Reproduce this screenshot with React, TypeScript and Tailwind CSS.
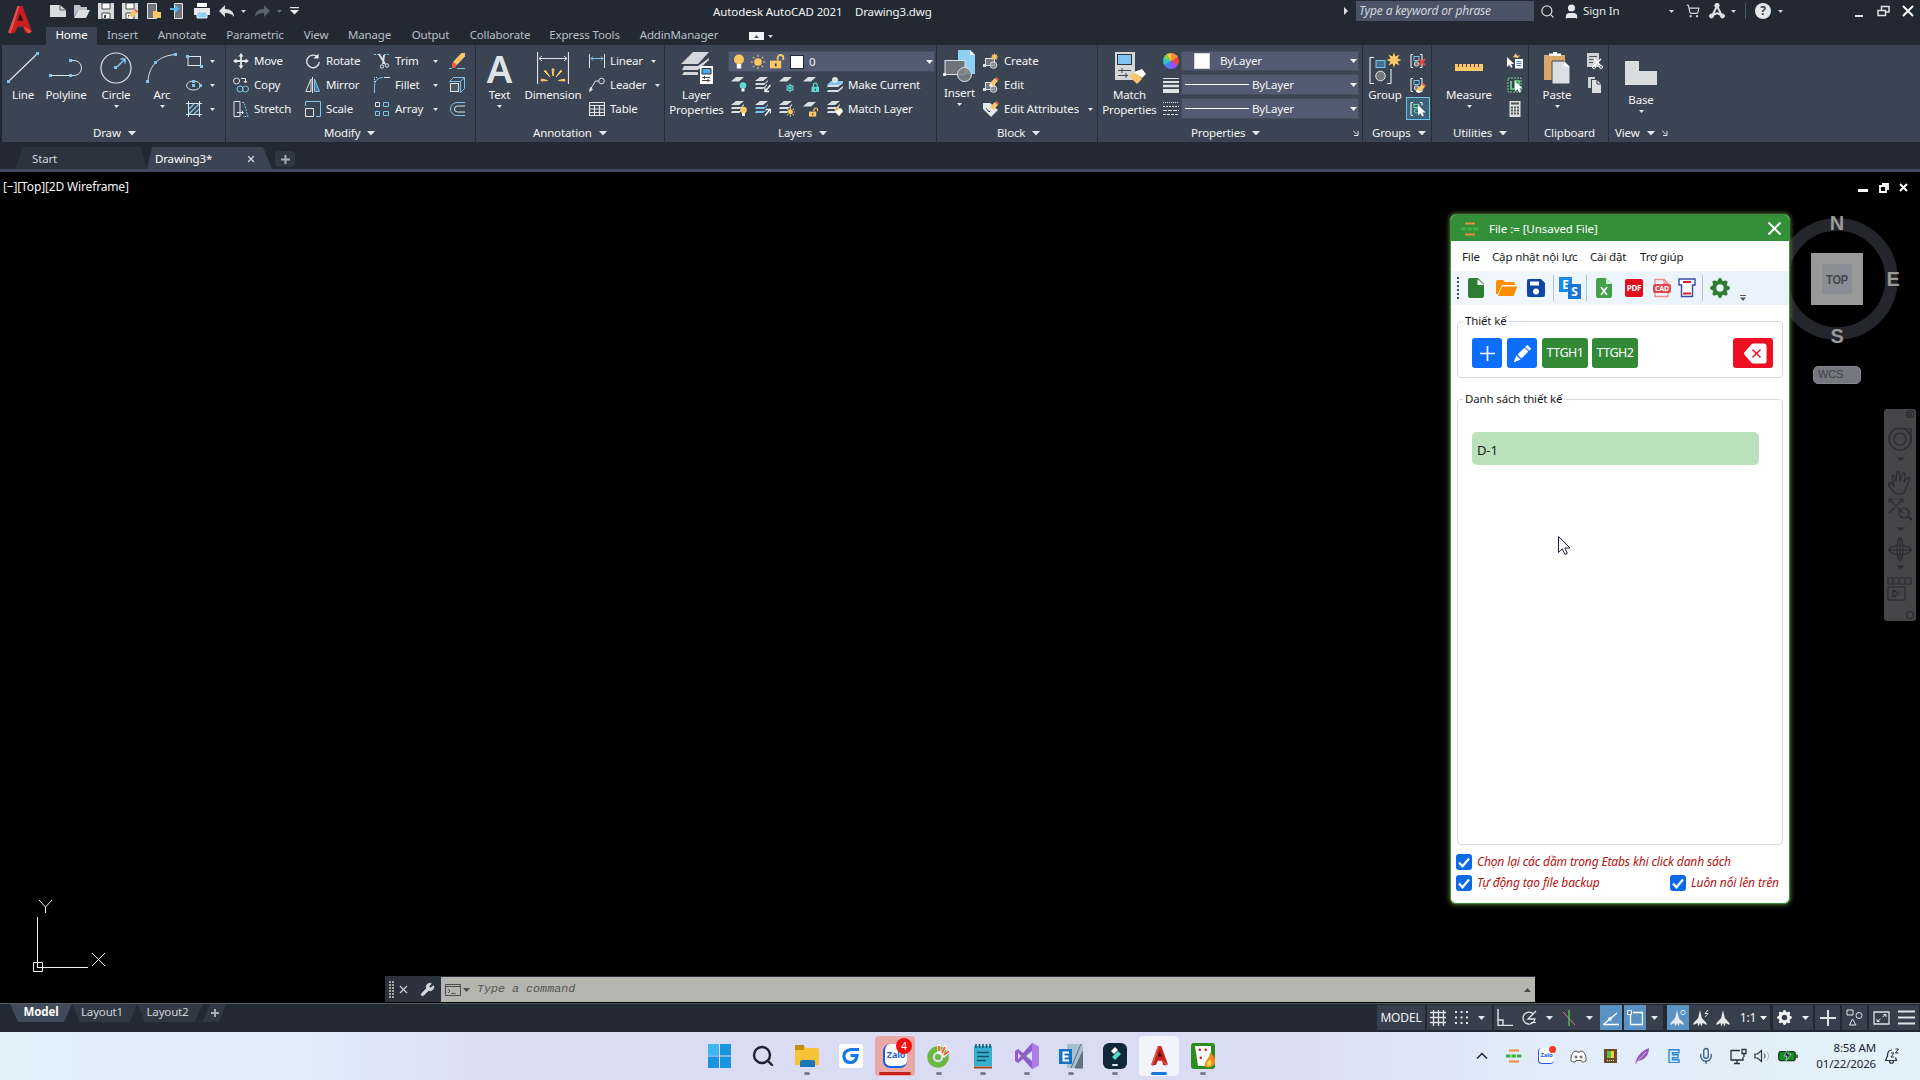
import type { ReactNode } from "react";
import { clsx } from "clsx";
import { twMerge } from "tailwind-merge";
import { Search, User, ShoppingCart, Wrench, X, Mic } from "lucide-react";
import { BsGearFill, BsPencilFill, BsBackspaceFill } from "react-icons/bs";

interface IconProps {
  w?: number,
  h?: number,
  className?: string,
  children: ReactNode,
}

const Ico = ({ w = 16, h = 16, className, children }: IconProps) => (
  <svg width={w} height={h} viewBox={`0 0 ${w} ${h}`} fill="none" stroke="#dfe3e6" strokeWidth="1" className={clsx("shrink-0", className)}>
    {children}
  </svg>
);

const Caret = ({ className, size = 5 }: { className?: string, size?: number }) => (
  <svg width={size} height={(size + 1) / 2} viewBox="0 0 10 5" preserveAspectRatio="none" className={clsx("shrink-0", className || "text-gray-200")}>
    <path d="M0 0h10L5 5z" fill="currentColor" />
  </svg>
);

const Launcher = () => (
  <Ico w={6} h={6}><path d="M0 .5 4 4.5M5 1v4.5H1" /></Ico>
);

const BLUE = "#7fc4ec";
const YELLOW = "#fbc767";
const TEAL = "#5fd9cf";

/* ---------- RIBBON ICONS ---------- */

const Dot = ({ x, y }: { x: number, y: number }) => (
  <rect x={x} y={y} width="3" height="3" fill={BLUE} stroke="none" />
);

const Pencil = ({ x, y }: { x: number, y: number }) => (
  <g transform={`translate(${x} ${y})`} stroke="none">
    <path d="M0 9 1.200 6 5 9.200 3 10z" fill="#fff" />
    <path d="M1 6 6 1 9 4 4 9z" fill={YELLOW} />
    <path d="M6 1 7.500 0 10 2.500 9 4z" fill="#ef5b50" />
  </g>
);

const Sheet = ({ x, y, s = 1, fill = "#dcdfe2" }: { x: number, y: number, s?: number, fill?: string }) => (
  <path transform={`translate(${x} ${y}) scale(${s})`} d="M5 0h8L8 4.500H0z" fill={fill} stroke="none" />
);

const Sheets = ({ accent }: { accent?: string }) => (
  <g stroke="none">
    <path d="M5 0h8L8 4H0z" fill="#dcdfe2" />
    <path d="M1 6h9l3-3v1.500L9 8H0z" fill={accent || "#dcdfe2"} />
    <path d="M1 10h8l3-3v1.500L8 12H0z" fill={accent || "#dcdfe2"} />
  </g>
);

const Bulb = ({ x, y, r = 3.5, fill = YELLOW }: { x: number, y: number, r?: number, fill?: string }) => (
  <g stroke="none">
    <circle cx={x} cy={y} r={r} fill={fill} />
    <rect x={x - r * 0.45} y={y + r * 0.9} width={r * 0.9} height={r * 0.9} fill="#fff" />
  </g>
);

const Sun = ({ x, y, r = 4, k = 1.9 }: { x: number, y: number, r?: number, k?: number }) => (
  <g stroke={YELLOW}>
    <circle cx={x} cy={y} r={r} fill={YELLOW} stroke="none" />
    {[0, 45, 90, 135, 180, 225, 270, 315].map((a) => (
      <path key={a} d={`M${r * 1.3} 0H${r * k}`} transform={`translate(${x} ${y}) rotate(${a})`} />
    ))}
  </g>
);

const Lock = ({ x, y, fill = YELLOW, open = false, s = 1 }: { x: number, y: number, fill?: string, open?: boolean, s?: number }) => (
  <g transform={`translate(${x} ${y}) scale(${s})`}>
    <rect x="0" y="4" width="8" height="5.500" fill={fill} stroke="none" />
    <path d={open ? "M5.500 4V2a2 2 0 0 1 4 0v1.500" : "M2 4V2.200a2 2 0 0 1 4 0V4"} stroke={fill} strokeWidth="1.3" />
    <rect x="3.500" y="6" width="1.200" height="2" fill="#333" stroke="none" />
  </g>
);

const Star = ({ x, y, s = 1 }: { x: number, y: number, s?: number }) => (
  <path
    transform={`translate(${x} ${y}) scale(${s})`}
    d="M0-7 1.300-3.200 5-5 3.200-1.300 7 0 3.200 1.300 5 5 1.300 3.200 0 7-1.300 3.200-5 5-3.200 1.300-7 0-3.200-1.300-5-5-1.300-3.200z"
    fill={YELLOW} stroke="none"
  />
);

const BlockShape = () => (
  <g>
    <rect x="2.500" y="5.500" width="9" height="7" fill="#6f757c" />
    <circle cx="10.500" cy="12" r="3.300" fill="#8b9096" fillOpacity=".7" />
    <rect x="0" y="11" width="3" height="3" fill="#dfe3e6" stroke="none" />
  </g>
);

const Arrow = ({ x, y, s = 1 }: { x: number, y: number, s?: number }) => (
  <path transform={`translate(${x} ${y}) scale(${s})`} d="M0 0v11l2.600-2.400L4.400 12l1.800-.900L4.600 7.800H8z" fill="#fff" stroke="none" />
);

/* ---------- RIBBON PARTS ---------- */

interface PanelProps {
  title: string,
  className: string,
  footClass?: string,
  caret?: boolean,
  launcher?: boolean,
  children: ReactNode,
}

const Panel = ({ title, className, footClass, caret = true, launcher, children }: PanelProps) => (
  <section className={clsx("flex flex-col shrink-0 border-r border-[#262e3a]", className)}>
    <div className="flex h-[79px] pt-1">{children}</div>
    <div className={clsx("flex h-[18px] items-center gap-[7px]", footClass || "justify-center")}>
      <span>{title}</span>
      {caret && <Caret size={8} />}
      {launcher && <Launcher />}
    </div>
  </section>
);

interface BigProps {
  label: string,
  second?: string,
  caret?: boolean,
  className: string,
  icon: ReactNode,
}

const Big = ({ label, second, caret, className, icon }: BigProps) => (
  <button className={clsx("flex flex-col items-center shrink-0", className)}>
    <span className="mt-[3px] flex h-8 items-center">{icon}</span>
    <span className="mt-[3px] leading-[15px] whitespace-nowrap">{label}</span>
    {second && <span className="leading-[15px] whitespace-nowrap">{second}</span>}
    {caret && <Caret className="mt-[3px] text-gray-200" />}
  </button>
);

const Row = ({ icon, label, caretClass }: { icon: ReactNode, label?: string, caretClass?: string }) => (
  <div className="flex h-6 items-center">
    {icon}
    {label && <span className="ml-[5px] whitespace-nowrap">{label}</span>}
    {caretClass && <Caret className={clsx("text-gray-200", caretClass)} />}
  </div>
);

const Combo = ({ className, children }: { className?: string, children: ReactNode }) => (
  <div className={clsx("flex items-center border border-[#444c60] bg-[#525b72] pr-px", className)}>
    {children}
    <Caret size={7} className="ml-auto text-gray-100" />
  </div>
);

const DrawPanel = () => (
  <Panel title="Draw" className="w-[224px]" footClass="pl-[91px]">
    <Big label="Line" className="w-[42px]" icon={
      <Ico w={32} h={32}><path d="M2 29 30 2" strokeWidth="1.200" /><Dot x={0} y={28} /><Dot x={29} y={0} /></Ico>
    } />
    <Big label="Polyline" className="w-[44px]" icon={
      <Ico w={34} h={32}><path d="M2 23.500H22M22 8.500h3a7.300 7.300 0 0 1 0 15h-3" /><Dot x={0} y={22} /><Dot x={20} y={22} /><Dot x={20} y={7} /></Ico>
    } />
    <Big label="Circle" caret className="w-[56px]" icon={
      <Ico w={32} h={32}><circle cx="16" cy="16" r="15" strokeWidth="1.200" /><path d="m17 15 8-8M20.500 7H25v4.500" stroke={BLUE} strokeWidth="1.500" /><Dot x={14} y={14} /></Ico>
    } />
    <Big label="Arc" caret className="w-[36px]" icon={
      <Ico w={32} h={32}><path d="M2 29C3 14 12 4 29 2.500" /><Dot x={0} y={28} /><Dot x={8} y={9} /><Dot x={28} y={1} /></Ico>
    } />
    <div className="ml-[6px] flex flex-col">
      <Row caretClass="ml-[7px]" icon={<Ico w={17}><rect x="2" y="3.500" width="12.500" height="9" /><Dot x={0} y={2} /><Dot x={14} y={12} /></Ico>} />
      <Row caretClass="ml-[7px]" icon={<Ico w={17}><ellipse cx="7.500" cy="8.500" rx="7" ry="4.500" /><Dot x={6} y={7} /><Dot x={6} y={3} /><Dot x={13} y={7} /></Ico>} />
      <Row caretClass="ml-[7px]" icon={<Ico w={17}><path d="M2.500 0v16M13.500 0v16M0 2.500h16M0 13.500h16" /><path d="m3 8 5-5M3 13 13 3M8 13l5-5" stroke={BLUE} strokeWidth="1.400" /></Ico>} />
    </div>
  </Panel>
);

const ModifyPanel = () => (
  <Panel title="Modify" className="w-[250px]" footClass="pl-[98px]">
    <div className="ml-[7px] w-[72px]">
      <Row label="Move" icon={<Ico><path d="M8 2v12M2 8h12" strokeWidth="1.800" /><path d="M8 0 5.500 3.500h5zM8 16l-2.500-3.500h5zM0 8l3.500-2.500v5zM16 8l-3.500-2.500v5z" fill="#eee" stroke="none" /></Ico>} />
      <Row label="Copy" icon={<Ico><circle cx="3.500" cy="4" r="3" /><path d="M8 1.500h4.500V5M11 4l1.500 2L14 4" /><circle cx="7" cy="12" r="3" stroke={BLUE} /><circle cx="12.500" cy="12" r="3" stroke={BLUE} /></Ico>} />
      <Row label="Stretch" icon={<Ico><path d="M1 .500h6v15H1zM4 11.500h6M8.500 9.500l2 2-2 2" /><path d="M9 1.500h2l4 14h-5" stroke={BLUE} strokeDasharray="2 1" /></Ico>} />
    </div>
    <div className="w-[69px]">
      <Row label="Rotate" icon={<Ico><path d="M12.500 4A6.300 6.300 0 1 0 14.300 9" strokeWidth="1.400" /><path d="M13.500.500v5h-5z" fill="#eee" stroke="none" /></Ico>} />
      <Row label="Mirror" icon={<Ico><path d="M6 2v12.500H.800zM7.500 0v16" /><path d="M9.500 2v12.500h5z" stroke={BLUE} fill="#3f7fa8" /></Ico>} />
      <Row label="Scale" icon={<Ico><path d="M.500 7.500h8v8h-8z" /><path d="M.500 5V.500h15v15H11" stroke={BLUE} /></Ico>} />
    </div>
    <div className="w-[75px]">
      <Row label="Trim" caretClass="ml-[14px]" icon={<Ico><path d="M0 1.500h5M10 1.500h6" stroke={BLUE} strokeDasharray="2 1" /><path d="m5 1 6 10M10 2l-1 9" strokeWidth="1.800" /><circle cx="8" cy="13.500" r="1.700" /><circle cx="13" cy="12.500" r="1.700" /></Ico>} />
      <Row label="Fillet" caretClass="ml-[13px]" icon={<Ico><path d="M.500 16V9C.500 3 4 .800 9 .500" stroke={BLUE} /><path d="M10 .500h6" /><path d="M.500 5V.500H4" strokeDasharray="1 1" /></Ico>} />
      <Row label="Array" caretClass="ml-[10px]" icon={<Ico><path d="M1.500 1.500h4v4h-4z" /><path d="M9.500 1.500h5v4h-5zM1.500 10.500h4v4h-4zM9.500 10.500h5v4h-5z" stroke={BLUE} /></Ico>} />
    </div>
    <div>
      <Row icon={<Ico><path d="m4 9 8.500-9H16v3.500L8 12z" fill={YELLOW} stroke="none" /><path d="m4 9 4 3-2 3H3v-4z" fill="#ef5b50" stroke="none" /><path d="M0 15.500h3M8 15.500h8" stroke={BLUE} /></Ico>} />
      <Row icon={<Ico><rect x="1.500" y="6.500" width="8" height="8" fill="#4f5a68" /><path d="m.500 4.500 4-4h11v11l-4 4M.500 4.500h11v11M11.500 4.500l4-4" stroke={BLUE} /></Ico>} />
      <Row icon={<Ico><path d="M16 1.500H8a6.300 6.300 0 0 0 0 13h8" stroke={BLUE} /><path d="M16 5H8.500a3 3 0 0 0 0 6H16" /></Ico>} />
    </div>
  </Panel>
);

const AnnotationPanel = () => (
  <Panel title="Annotation" className="w-[189px]" footClass="pl-[57px]">
    <Big label="Text" caret className="ml-[2px] w-[43px]" icon={
      <span className="text-[38px] leading-8 font-semibold text-[#dfe3e6]">A</span>
    } />
    <Big label="Dimension" className="w-[64px]" icon={
      <Ico w={32} h={32}>
        <path d="M.500 0v32M31.500 0v32" strokeWidth="1.200" /><path d="M2 6.500h28M5 4 2 6.500 5 9M27 4l3 2.500L27 9" />
        <path d="M15 17h2l-1 7zM7 19l1.500-.500L13 25zM25 19l-1.500-.500L19 25zM4 29l.500-2 6 1.500zM28 29l-.500-2-6 1.500z" fill={YELLOW} stroke={YELLOW} />
      </Ico>
    } />
    <div className="ml-[4px]">
      <Row label="Linear" caretClass="ml-[8px]" icon={<Ico><path d="M.500 1v14M15.500 1v14" /><path d="M2 5.500h12M4 3.500l-2 2 2 2M12 3.500l2 2-2 2" stroke={BLUE} /></Ico>} />
      <Row label="Leader" caretClass="ml-[9px]" icon={<Ico><circle cx="12.500" cy="4" r="2.800" /><path d="M9.500 4H6.500L1 13" /><path d="M0 15.500 1 10l3 2.500z" fill="#dfe3e6" stroke="none" /></Ico>} />
      <Row label="Table" icon={<Ico><path d="M.500 1.500h15v13H.500zM.500 4.500h15M.500 8h15M.500 11.500h15M5.500 4.500v10M10.500 4.500v10" strokeWidth="1.200" /></Ico>} />
    </div>
  </Panel>
);

const LayersPanel = () => (
  <Panel title="Layers" className="w-[272px]" footClass="pl-[113px]">
    <Big label="Layer" second="Properties" className="w-[63px]" icon={
      <Ico w={32} h={32}>
        <path d="M12 0h16L17 12H0zM3 14h14l11-8v2L17 18H1zM3 20h14v3H1z" fill="#d5d8db" stroke="none" />
        <path d="M19 14h13v18H19z" fill="#fff" stroke="none" /><path d="M21 16.500h9v5.500h-9z" fill="#4aa9e8" stroke="#333" /><path d="M21 25.500h8M21 28.500h8M23.500 24v3M27 27v3" stroke="#444" />
      </Ico>
    } />
    <div className="flex flex-col">
      <Combo className="mt-[2px] h-[21px] w-[207px] pl-[4px]" >
        <Ico w={13} h={16}><Bulb x={6} y={5.5} r={5} /></Ico>
        <Ico w={16} h={16} className="ml-[4px]"><Sun x={8} y={8} r={3.8} /></Ico>
        <Ico w={16} h={16} className="ml-[3px]"><g transform="translate(1 1)"><Lock x={0} y={0} s={1.4} open /></g></Ico>
        <span className="ml-[5px] h-[14px] w-[14px] border border-gray-800 bg-white" />
        <span className="ml-[5px]">0</span>
      </Combo>
      <div className="mt-px flex h-6 items-center gap-2 pl-[3px]">
        <Ico><Sheet x={0} y={0} /><Bulb x={12} y={8.5} r={3.3} fill={TEAL} /></Ico>
        <Ico><Sheets accent="#d5d8db" /><path d="m15.500 8-5 6M10 10.500V14.500h4" stroke="#fff" strokeWidth="1.300" /></Ico>
        <Ico><Sheet x={0} y={0} /><circle cx="11" cy="11" r="3" stroke={TEAL} /><path d="M11 6.500v9M7 8.700l8 4.600M15 8.700l-8 4.600" stroke={TEAL} /></Ico>
        <Ico><Sheet x={0} y={0} /><Lock x={8.5} y={6} fill={TEAL} s={0.95} /></Ico>
        <Ico w={17}><path d="M1 8h10l5-4v2l-5 4H0zM1 13h10l5-4v2l-5 4H0z" fill="#dcdfe2" stroke="none" /><path d="M4 4h12l-4 4H0z" fill={BLUE} stroke="none" /><circle cx="8" cy="3" r="3" fill="#dcdfe2" stroke="none" /></Ico>
        <span className="-ml-[4px]">Make Current</span>
      </div>
      <div className="flex h-6 items-center gap-2 pl-[3px]">
        <Ico><Sheets /><Bulb x={12.5} y={9} r={3.3} /></Ico>
        <Ico><Sheets accent={BLUE} /><path d="m10 14.500 5-6M11 8.500h4.500v4" stroke="#fff" strokeWidth="1.300" /></Ico>
        <Ico><Sheets /><Sun x={11.5} y={11} r={2.4} k={2} /></Ico>
        <Ico><Sheet x={0} y={1} /><Lock x={6} y={7} open s={0.9} /></Ico>
        <Ico w={17}><Sheets /><path d="m8 8 5 6M10 6l5 6" stroke={YELLOW} strokeWidth="2" /><path d="m8 11 6-4 2 3-4 5z" fill="#fff" stroke="none" /></Ico>
        <span className="-ml-[4px]">Match Layer</span>
      </div>
    </div>
  </Panel>
);

const BlockPanel = () => (
  <Panel title="Block" className="w-[161px]" footClass="pl-[60px]">
    <Big label="Insert" caret className="-mt-[2px] w-[45px]" icon={
      <Ico w={33} h={33}>
        <path d="M15 0h12l5 5v19H15z" fill="#8fd0f5" stroke="none" /><path d="M27 0v5h5z" fill="#fff" stroke="none" />
        <rect x="2" y="10.500" width="20" height="14" fill="#6f757c" /><circle cx="21.500" cy="24.500" r="7" fill="#7b8187" fillOpacity=".85" /><rect x="0" y="23" width="3" height="3" fill="#eee" stroke="none" />
      </Ico>
    } />
    <div className="ml-px">
      <Row label="Create" icon={<Ico><BlockShape /><Star x={11.5} y={4} s={0.6} /></Ico>} />
      <Row label="Edit" icon={<Ico><BlockShape /><Pencil x={6} y={0} /></Ico>} />
      <Row label="Edit Attributes" caretClass="ml-[9px]" icon={<Ico><path d="M0 2h7l8 7-7 7-8-8z" fill="#e4e7e9" stroke="none" /><path d="m3 7 3 4 4-4" stroke="#444" /><Pencil x={6} y={0} /></Ico>} />
    </div>
  </Panel>
);

const PropertiesPanel = () => (
  <Panel title="Properties" className="w-[265px]" footClass="pl-[93px] [&>svg:last-child]:ml-[86px]" launcher>
    <Big label="Match" second="Properties" className="w-[63px]" icon={
      <Ico w={32} h={32}>
        <rect x="1" y="0" width="20" height="28" fill="#d5d8db" stroke="none" /><rect x="3.500" y="2.500" width="14" height="10" fill="#7fc4f2" stroke="#333" />
        <path d="M4 18.500h13M4 23.500h10M8 16v5M12 21v5" stroke="#444" /><path d="m15 24 7-4 6 7-5 5z" fill={YELLOW} stroke="none" /><path d="m20 20 8-3 4 5-4 4zM26 20l3-2" fill="#fff" stroke="none" />
      </Ico>
    } />
    <div className="flex w-[20px] flex-col items-start pl-[2px]">
      <Row icon={<span className="h-4 w-4 rounded-full bg-[conic-gradient(#fb8c2f_0_60deg,#e8473f_60deg_120deg,#9b4ff0_120deg_180deg,#4b7cf5_180deg_240deg,#2fc4c9_240deg_290deg,#7bd04a_290deg_330deg,#f7c948_330deg)]" />} />
      <Row icon={<Ico><path d="M0 1.500h16" /><path d="M0 5h16" strokeWidth="2" /><path d="M0 9h16" strokeWidth="2.500" /><path d="M0 14h16" strokeWidth="4" /></Ico>} />
      <Row icon={<Ico><path d="M0 1.500h16" strokeDasharray="1 1" /><path d="M0 5.500h16" strokeDasharray="2 1" /><path d="M0 9.500h16" strokeDasharray="4 1" /><path d="M0 13.500h16" strokeDasharray="3 1" /></Ico>} />
    </div>
    <div className="mt-[2px] flex w-[178px] flex-col gap-[3px]">
      <Combo className="h-[20px] pl-[12px]"><span className="h-4 w-4 border border-gray-300 bg-white" /><span className="ml-[10px]">ByLayer</span></Combo>
      <Combo className="h-[21px] pl-[3px]"><span className="h-px w-[64px] bg-white" /><span className="ml-[3px]">ByLayer</span></Combo>
      <Combo className="h-[21px] pl-[3px]"><span className="h-px w-[64px] bg-white" /><span className="ml-[3px]">ByLayer</span></Combo>
    </div>
  </Panel>
);

const Brackets = ({ children }: { children?: ReactNode }) => (
  <Ico>
    <path d="M3 1.500H1v13h2M10 1.500h2v13h-2" stroke="#fff" />
    <rect x="4" y="3.500" width="5" height="4" stroke={BLUE} /><circle cx="6.500" cy="11" r="2.200" fill="#777" />
    {children}
  </Ico>
);

const RightPanels = () => (
  <>
    <Panel title="Groups" className="w-[69px]" footClass="pl-[9px]">
      <Big label="Group" className="w-[43px] pl-px" icon={
        <Ico w={33} h={32}>
          <path d="M5 5.500H1v26h4M18 31.500h4V17" stroke="#fff" /><rect x="7" y="8.500" width="9" height="7" fill="#3f6f96" stroke={BLUE} /><circle cx="11.500" cy="24" r="4.800" fill="#777" /><Star x={25} y={8} s={1.1} />
        </Ico>
      } />
      <div className="flex w-6 flex-col items-center">
        <div className="flex h-6 items-center"><Brackets><path d="m9 6 6 6M15 6l-6 6" stroke="#e8473f" strokeWidth="2" /></Brackets></div>
        <div className="flex h-6 items-center"><Brackets><Pencil x={6} y={6} /></Brackets></div>
        <div className="flex h-[23px] w-6 items-center justify-center border border-[#6cc2ee] bg-[#3c6279]">
          <Ico><path d="M3 1.500H1v13h2M10 1.500h2v3" stroke="#fff" /><rect x="4" y="3.500" width="5" height="3" stroke="#6fdc8c" /><circle cx="6.500" cy="10" r="2.200" stroke="#6fdc8c" /><Arrow x={8} y={4} s={0.95} /></Ico>
        </div>
      </div>
    </Panel>
    <Panel title="Utilities" className="w-[97px]" footClass="pl-[21px]">
      <Big label="Measure" caret className="w-[74px]" icon={
        <Ico w={28} h={32}><path d="M0 12h28v7H0z" fill={YELLOW} stroke="none" /><path d="M3.500 12v3M7.500 12v3M11.500 12v3M15.500 12v3M19.500 12v3M23.500 12v3" stroke="#3b4453" /></Ico>
      } />
      <div className="ml-px">
        <Row icon={<Ico><path d="M6 4 9 0l1 3 3-1-2 3z" fill={YELLOW} stroke="none" /><Arrow x={0} y={4} s={0.9} /><rect x="8" y="6" width="8" height="9.500" fill="#fff" stroke="none" /><path d="M9.500 8.500h5M9.500 10.500h5M9.500 12.500h5" stroke="#3a7fb5" /></Ico>} />
        <Row icon={<Ico><rect x="1" y="1" width="13" height="14" stroke="#6fdc8c" strokeDasharray="2 1" /><path d="M4 4v8h4V4h4v4" stroke="#6fdc8c" strokeWidth="1.600" /><Arrow x={8} y={4} s={0.95} /></Ico>} />
        <Row icon={<Ico><rect x="2.500" y="0" width="11" height="16" fill="#dcdfe2" stroke="none" /><path d="M4 2.500h8" stroke="#555" strokeWidth="2" /><path d="M4 6.500h8M4 9.500h8M4 12.500h8" stroke="#555" strokeWidth="2" strokeDasharray="2 1" /></Ico>} />
      </div>
    </Panel>
    <Panel title="Clipboard" className="w-[80px]" caret={false} footClass="pl-[15px]">
      <Big label="Paste" caret className="ml-[4px] w-[48px]" icon={
        <Ico w={27} h={32}><path d="M0 3h21v25H0z" fill="#dca869" stroke="none" /><path d="M5 4V1.500h4V0h4v1.500h4V4z" fill="#fff" stroke="none" /><path d="M8 9h12l6 6v17H8z" fill="#dcdfe2" stroke="#3b4453" /><path d="M20 9v6h6z" fill="#fff" stroke="none" /></Ico>
      } />
      <div className="ml-[6px]">
        <Row icon={<Ico><path d="M0 0h12v14H0z" fill="#cfd3d6" stroke="none" /><path d="M2 3.500h8M2 6.500h6M2 9.500h4" stroke="#555" /><path d="m7 6 7 7M14 6l-7 7" stroke="#fff" strokeWidth="1.400" /><circle cx="7" cy="14" r="1.500" stroke="#fff" /><circle cx="14" cy="14" r="1.500" stroke="#fff" /></Ico>} />
        <Row icon={<Ico><path d="M1 0h7v2H4v9H1z" fill="#cfd3d6" stroke="none" /><path d="M5 3h5l4 4v9H5z" fill="#dcdfe2" stroke="none" /><path d="M10 3v4h4" stroke="#3b4453" /></Ico>} />
      </div>
    </Panel>
    <Panel title="View" className="flex-1 border-r-0" launcher footClass="pl-[6px]">
      <Big label="Base" caret className="mt-[5px] ml-[8px] w-[48px]" icon={
        <Ico w={32} h={32}><path d="M0 4h14v10h18v14H0z" fill="#d9dcdf" stroke="none" /></Ico>
      } />
    </Panel>
  </>
);

/* ---------- TITLE BAR AND TABS ---------- */

const AppLogo = ({ size }: { size: number }) => (
  <svg width={size} height={size * 1.15} viewBox="0 0 24 28">
    <path d="M9.500 0h5L24 26l-3 2-4-1-1.500-6h-6L7 27l-5 1-2-1z" fill="#c8201f" />
    <path d="M12 7 9.500 15h6z" fill="#3a1416" />
    <path d="M9.500 0h2L5 21l-3 7-2-1zM15 21l6 7 3-2-6-4z" fill="#ef7c6e" fillOpacity=".6" />
  </svg>
);

const Floppy = ({ pencil }: { pencil?: boolean }) => (
  <Ico><path d="M0 0h16v16H0z" fill="#d9dcdf" stroke="none" /><path d="M4 0h8v6H4z" fill="#fff" stroke="#444" /><path d="M4 10h8v6H4z" fill="#fff" stroke="#444" /><path d="M6 12h2v3H6z" fill="#444" stroke="none" />{pencil && <Pencil x={6} y={6} />}</Ico>
);

const TitleBar = () => (
  <div className="flex h-[27px] items-start">
    <div className="flex h-[22px] w-[460px] items-center pl-[50px]">
      <Ico><path d="M0 2h10l6 5v7H0z" fill="#d9dcdf" stroke="none" /><path d="M10 2v5h6" stroke="#555" /></Ico>
      <Ico className="ml-2"><path d="M0 2h6l1 2h6v3H4l-4 7z" fill="#bfc3c7" stroke="none" /><path d="M4 7h12l-4 8H0z" fill="#dcdfe2" stroke="none" /></Ico>
      <span className="ml-2"><Floppy /></span>
      <span className="ml-2"><Floppy pencil /></span>
      <Ico className="ml-2"><path d="M1.500.500h9v15h-9z" fill="#6f757c" /><path d="M7 8h4l1 1h3v6H7z" fill={YELLOW} stroke="none" /></Ico>
      <Ico className="ml-2"><path d="M4.500.500h8v15h-8z" fill="#6f757c" /><path d="M0 6h7M5 3l3 3-3 3" stroke="#56b8f0" strokeWidth="1.800" /></Ico>
      <Ico className="ml-2"><path d="M3 0h10v4H3z" fill="#fff" stroke="none" /><path d="M0 5h16v7H0z" fill="#e7e9eb" stroke="none" /><path d="M3 9h10v6H3z" fill="#8fd0f5" stroke="#eee" /></Ico>
      <Ico className="ml-[9px]"><path d="M6 2v4c6 0 9 3 9 8-2-3-5-4-9-4v4L0 8z" fill="#dcdfe2" stroke="none" /></Ico>
      <Caret className="ml-[6px] text-gray-300" />
      <Ico className="ml-[8px]"><path d="M10 2v4c-6 0-9 3-9 8 2-3 5-4 9-4v4l6-6z" fill="#5a626d" stroke="none" /></Ico>
      <Caret className="ml-[7px] text-gray-500" />
      <Ico w={9} h={8} className="ml-[8px]"><path d="M0 .500h9" strokeWidth="1.500" /><path d="M0 3h9L4.500 7.500z" fill="#eee" stroke="none" /></Ico>
    </div>
    <div className="flex h-6 w-[882px] items-center pl-[253px] text-gray-100">
      <span className="w-[142px] tracking-[-0.1px]">Autodesk AutoCAD 2021</span>
      <span className="tracking-[-0.15px]">Drawing3.dwg</span>
    </div>
    <div className="flex h-[22px] items-center">
      <Ico w={5} h={8} className="mr-[7px] ml-[2px]"><path d="M0 0v8l4-4z" fill="#dcdfe2" stroke="none" /></Ico>
      <span className="h-5 w-[178px] bg-[#4a5366] pl-[3px] text-[12px] leading-5 text-gray-300 italic">Type a keyword or phrase</span>
      <Search size={15} className="ml-[6px] text-gray-300" />
      <User size={17} fill="currentColor" className="ml-[8px] text-gray-200" />
      <span className="ml-[3px] w-[84px] text-gray-200">Sign In</span>
      <Caret className="ml-[2px] text-gray-300" />
      <ShoppingCart size={14} className="ml-[12px] text-gray-300" />
      <Ico className="ml-[9px]"><path d="M8 3 3 13M8 3l5 10M4 12l4-2 4 2" strokeWidth="2" /><circle cx="8" cy="2.500" r="2.200" fill="#ddd" /><circle cx="2.500" cy="13" r="2" fill="#ddd" /><circle cx="13.500" cy="13" r="2" fill="#ddd" /></Ico>
      <Caret className="ml-[6px] text-gray-300" />
      <span className="ml-[9px] h-4 w-px bg-gray-600" />
      <span className="ml-[9px] flex h-4 w-4 items-center justify-center rounded-full bg-gray-200 text-[12px] font-bold text-gray-700">?</span>
      <Caret className="ml-[7px] text-gray-300" />
      <Ico w={8} h={12} className="ml-[72px]"><path d="M0 11h8" strokeWidth="2" /></Ico>
      <Ico w={13} h={12} className="ml-[14px]"><path d="M1 5.500h7.500v5H1zM4.500 5V1.500H12v5.500H9" strokeWidth="1.500" /></Ico>
      <Ico w={12} h={12} className="ml-[12px]"><path d="m1 1 10 10M11 1 1 11" strokeWidth="1.800" stroke="#fff" /></Ico>
    </div>
  </div>
);

const TABS = [
  { name: "Home", cls: "w-[51px] bg-[#3b4453] text-white" },
  { name: "Insert", cls: "w-[51px]" },
  { name: "Annotate", cls: "w-[68px]" },
  { name: "Parametric", cls: "w-[78px]" },
  { name: "View", cls: "w-[44px]" },
  { name: "Manage", cls: "w-[63px]" },
  { name: "Output", cls: "w-[59px]" },
  { name: "Collaborate", cls: "w-[80px]" },
  { name: "Express Tools", cls: "w-[89px]" },
  { name: "AddinManager", cls: "w-[100px]" },
];

const RibbonTabs = () => (
  <div className="flex h-[18px] items-center pl-[46px]">
    {TABS.map((tab) => (
      <span key={tab.name} className={clsx("h-full shrink-0 text-center leading-[16px] whitespace-nowrap text-[#b9bfc6]", tab.cls)}>{tab.name}</span>
    ))}
    <span className="ml-[20px] flex h-2 w-[15px] items-center justify-center bg-gray-100">
      <Caret size={5} className="rotate-180 text-gray-600" />
    </span>
    <Caret className="ml-[4px] text-gray-300" />
  </div>
);

const FileTabs = () => (
  <div className="flex h-[27px] items-end pl-[15px]">
    <div className="flex h-[22px] w-[132px] items-center bg-[#2b333d] pt-[2px] pl-[17px] text-gray-300 [clip-path:polygon(8px_0,126px_0,100%_100%,0_100%)]">Start</div>
    <div className="flex h-[22px] w-[125px] items-center bg-[#3b4453] pt-[2px] pl-[8px] text-white [clip-path:polygon(5px_0,116px_0,100%_100%,0_100%)]">
      <span className="w-[91px]">Drawing3*</span>
      <X size={10} strokeWidth={3} className="text-gray-300" />
    </div>
    <div className="mb-[2px] ml-[3px] flex h-[16px] w-[20px] items-center justify-center rounded-sm bg-[#2e3742]">
      <Ico w={9} h={9}><path d="M4.500 0v9M0 4.500h9" strokeWidth="2" stroke="#a9aeb4" /></Ico>
    </div>
  </div>
);

/* ---------- CANVAS ---------- */

const UcsIcon = () => (
  <svg width="80" height="80" viewBox="0 0 80 80" className="absolute top-[725px] left-[30px]" stroke="#f4f4f4" fill="none">
    <path d="M7.500 20v51M7.500 70.500H58M3.500 65.500h9v9h-9z" />
    <path d="m9 3 6.500 7L22 3M15.500 10v6M62 56l13 13M75 56 62 69" />
  </svg>
);

const ViewCube = () => (
  <div className="absolute top-[37px] left-[1776px] h-[180px] w-[128px]">
    <svg width="128" height="140" viewBox="0 0 128 140">
      <circle cx="61" cy="70" r="54.500" fill="none" stroke="#25262b" strokeWidth="12.500" />
      <rect x="35" y="44" width="52" height="52" fill="#999" />
      <rect x="46" y="55" width="30" height="30" fill="#8b8d95" />
      <g fill="#9a9a9a" fontFamily="Liberation Sans, sans-serif" fontWeight="bold" textAnchor="middle">
        <text x="61" y="21" fontSize="20">N</text>
        <text x="117" y="77" fontSize="20">E</text>
        <text x="61" y="134" fontSize="20">S</text>
        <text x="61" y="75" fontSize="13" fill="#44474f" textLength="22" lengthAdjust="spacingAndGlyphs">TOP</text>
      </g>
    </svg>
    <div className="mt-[17px] ml-[37px] h-[18px] w-[48px] rounded-[5px] border border-[#85858d] bg-[#77777f] pl-[4px] font-[Liberation_Sans,sans-serif] text-[11px] leading-[14px] text-[#3f4048]">WCS</div>
  </div>
);

const NavBar = () => (
  <div className="absolute top-[237px] left-[1884px] h-[212px] w-[32px] rounded-[3px] bg-[#454547]">
    <svg width="32" height="212" viewBox="0 0 32 212" fill="none" stroke="#2a2b2f" strokeWidth="1.200">
      <circle cx="26" cy="5" r="3.500" /><path d="m24 3 4 4M28 3l-4 4" />
      <circle cx="16" cy="30" r="11" /><circle cx="16" cy="30" r="6" /><path d="M13 20h14v14" />
      <path d="M14 49h5l-2.500 2.500z" fill="#2a2b2f" />
      <path d="M9 82c-2-4-6-5-4-8 2-1 4 2 5 3l-2-10c2-2 3 0 4 6l1-10c2-2 3 0 3 9l3-8c2-1 3 1 1 9l4-5c2 0 2 2 0 6l-3 8c-2 4-9 4-12 0z" />
      <path d="m5 90 14 14M19 90 5 104M5 94v-4h4M15 90h4v4" /><circle cx="20" cy="104" r="5" /><path d="m24 108 4 3" strokeWidth="2" />
      <path d="M14 119h5l-2.500 2.500zM14 157h5l-2.500 2.500z" fill="#2a2b2f" />
      <ellipse cx="16" cy="141" rx="11" ry="4.500" /><ellipse cx="16" cy="140" rx="3" ry="11" /><path d="M16 128v25M5 141h22" />
      <path d="M4 169h23v6H4zM9 169v6M15 169v6M21 169v6M4 178h17v13H4zM9 181v7l6-3.500z" />
      <circle cx="26" cy="206" r="3.500" />
    </svg>
  </div>
);

const CommandLine = () => (
  <div className="absolute top-[804px] left-[385px] flex h-[26px] w-[1150px] items-center bg-[#2b323d]">
    <div className="flex w-[56px] items-center pl-[4px]">
      <Ico w={5} h={17}><path d="M1 0v17M4 0v17" strokeWidth="2" strokeDasharray="2 1" stroke="#a6a6a0" /></Ico>
      <X size={13} className="ml-[3px] text-gray-300" />
      <Wrench size={15} fill="currentColor" strokeWidth={1.5} className="ml-[10px] text-gray-300" />
    </div>
    <div className="mt-px flex h-[25px] flex-1 items-center bg-[#b4b4b1] pt-px pr-[4px] pl-[4px]">
      <Ico w={16} h={12}><path d="M.500.500h15v11H.500zM.500 2.500h15M3 5l2 2-2 2M6.500 9.500h4" stroke="#4b4b4b" /></Ico>
      <Caret size={7} className="ml-[2px] text-[#4b4b4b]" />
      <span className="ml-[7px] font-[Liberation_Mono,monospace] text-[11.7px] tracking-normal text-[#55554f] italic">Type a command</span>
      <Caret size={7} className="ml-auto rotate-180 text-[#4b4b4b]" />
    </div>
  </div>
);

/* ---------- ADD-IN WINDOW ---------- */

const Sep = ({ className }: { className?: string }) => (
  <span className={twMerge("h-[26px] w-px bg-[#b9bfcc]", className)} />
);

const AddinToolbar = () => (
  <div className="mt-[1px] flex h-[34px] items-center bg-gradient-to-r from-[#f1f7fe] to-[#e9f2fb]">
    <Ico w={2} h={22} className="ml-[6px]"><path d="M1 0v22" strokeWidth="2" strokeDasharray="2 2" stroke="#454a55" /></Ico>
    <Ico w={16} h={20} className="ml-[9px]"><path d="M2 0h8l6 6v12a2 2 0 0 1-2 2H2a2 2 0 0 1-2-2V2a2 2 0 0 1 2-2z" fill="#2e7d32" stroke="none" /><path d="M9.500 1v6H16z" fill="#fff" stroke="none" /></Ico>
    <Ico w={22} h={16} className="ml-[12px]"><path d="M0 14V2a2 2 0 0 1 2-2h5l2 2h8a2 2 0 0 1 2 2v1H6L2 14z" fill="#fb8c00" stroke="none" /><path d="M6 6.500h15.500L17.500 16H2z" fill="#fb8c00" stroke="none" /></Ico>
    <Ico w={18} h={18} className="ml-[9px]"><path d="M2 0h12l4 4v12a2 2 0 0 1-2 2H2a2 2 0 0 1-2-2V2a2 2 0 0 1 2-2z" fill="#0d47a1" stroke="none" /><path d="M3 2.500h9v4H3z" fill="#fff" stroke="none" /><circle cx="9" cy="12.500" r="3" fill="#fff" stroke="none" /></Ico>
    <Sep className="ml-[8px]" />
    <div className="ml-[5px] flex h-[22px] w-[22px] items-start">
      <span className="h-[15px] w-[13px] shrink-0 bg-[#1e88e5] text-center text-[12px] leading-[15px] font-bold text-white">E</span>
      <span className="mt-[7px] -ml-[4px] h-[15px] w-[13px] shrink-0 bg-[#1976d2] text-center text-[12px] leading-[15px] font-bold text-white">S</span>
    </div>
    <Sep className="ml-[5px] bg-[#9ccbe8]" />
    <Ico w={16} h={20} className="ml-[9px]"><path d="M2 0h8l6 6v12a2 2 0 0 1-2 2H2a2 2 0 0 1-2-2V2a2 2 0 0 1 2-2z" fill="#43a047" stroke="none" /><path d="M10 0v6h6z" fill="#d9f0da" stroke="none" /><path d="m5 9 6 8M11 9l-6 8" stroke="#fff" strokeWidth="1.600" /></Ico>
    <span className="ml-[13px] flex h-[18px] w-[18px] items-center justify-center rounded-[2px] bg-[#e0101f] text-[8px] font-bold tracking-tight text-white">PDF</span>
    <div className="relative ml-[10px] flex h-[20px] w-[18px] items-center">
      <Ico w={18} h={20}><path d="M2 8V1.500h9l4 4V8M2 14v4.500h13V14M11 1.500v4h4" stroke="#ee8d92" strokeWidth="1.300" /></Ico>
      <span className="absolute inset-x-0 top-[6px] h-[9px] rounded-[2px] bg-[#e2474f] text-center text-[7px] leading-[9px] font-bold text-white">CAD</span>
    </div>
    <Ico w={18} h={20} className="ml-[7px]"><path d="M1 1h16v6h-2.500v11.500h-11V7H1z" fill="#fff" stroke="#3a48a8" strokeWidth="1.400" /><path d="M5 4h8M5 15.500h8" stroke="#d8232f" strokeWidth="2" /></Ico>
    <Sep className="ml-[6px]" />
    <BsGearFill size={20} className="ml-[7px] text-[#2e7d32]" />
    <Ico w={6} h={6} className="mt-[20px] ml-[10px]"><path d="M0 .500h6" stroke="#555" /><path d="M0 2.500h6L3 6z" fill="#555" stroke="none" /></Ico>
  </div>
);

const Check = ({ label, className }: { label: string, className?: string }) => (
  <label className={clsx("flex items-center gap-[5px]", className)}>
    <span className="flex h-4 w-4 items-center justify-center rounded-[3px] bg-[#0d6ae6]">
      <svg width="12" height="11" viewBox="0 0 12 11" fill="none"><path d="m1 5.500 3.500 3.800L11 1.500" stroke="#fff" strokeWidth="2.200" /></svg>
    </span>
    <span className="text-[12px] tracking-[-0.13px] whitespace-nowrap text-[#b3120f] italic">{label}</span>
  </label>
);

const AddinWindow = () => (
  <div className="absolute top-[42px] left-[1450px] flex h-[690px] w-[340px] flex-col overflow-hidden rounded-[6px] border border-[#388e3c] bg-white text-[#1a1a1a] shadow-[0_0_4px_1px_#4d6b33]">
    <div className="flex h-[26px] shrink-0 items-center bg-[#338f38] pt-px text-white">
      <Ico w={18} h={14} className="ml-[10px]"><path d="M4 1.500h10M4 12.500h10" stroke="#f08a3c" strokeWidth="2" /><path d="M0 7h18" stroke="#3fae49" strokeWidth="3" strokeDasharray="5 1" /></Ico>
      <span className="ml-[10px] tracking-[-0.05px]">File := [Unsaved File]</span>
      <Ico w={13} h={13} className="mr-[8px] ml-auto"><path d="m.500.500 12 12M12.500.500l-12 12" stroke="#fff" strokeWidth="2" /></Ico>
    </div>
    <div className="flex h-[29px] shrink-0 items-center pt-[2px] pl-[11px] whitespace-nowrap">
      <span className="w-[30px]">File</span>
      <span className="w-[98px]">Cập nhật nội lực</span>
      <span className="w-[50px]">Cài đặt</span>
      <span>Trợ giúp</span>
    </div>
    <AddinToolbar />
    <fieldset className="mt-[7px] mr-[6px] ml-[6px] h-[66px] rounded-[4px] border border-[#d4dbe4]">
      <legend className="ml-[5px] px-[2px] leading-[18px]">Thiết kế</legend>
      <div className="mt-[8px] flex h-[30px] pr-[9px] pl-[14px] text-[12.5px] text-white">
        <span className="flex w-[30px] items-center justify-center rounded-[3px] bg-[#0d6efd]"><Ico w={15} h={15}><path d="M7.500 0v15M0 7.500h15" stroke="#fff" strokeWidth="1.700" /></Ico></span>
        <span className="ml-[5px] flex w-[30px] items-center justify-center rounded-[3px] bg-[#0d6efd]"><BsPencilFill size={17} /></span>
        <span className="ml-[5px] flex w-[46px] items-center justify-center rounded-[3px] bg-[#338a36] tracking-[-0.5px]">TTGH1</span>
        <span className="ml-[4px] flex w-[46px] items-center justify-center rounded-[3px] bg-[#338a36] tracking-[-0.5px]">TTGH2</span>
        <span className="ml-auto flex w-[40px] items-center justify-center rounded-[3px] bg-[#ec1022]"><BsBackspaceFill size={23} className="ml-[4px]" /></span>
      </div>
    </fieldset>
    <fieldset className="mt-[12px] mr-[6px] ml-[6px] h-[455px] rounded-[4px] border border-[#d4dbe4]">
      <legend className="ml-[5px] px-[2px] leading-[18px]">Danh sách thiết kế</legend>
      <div className="mt-[24px] mr-[23px] ml-[14px] h-[33px] rounded-[5px] bg-[#bbe1bb] pt-[2px] pl-[5px] text-[13px] leading-[33px]">D-1</div>
    </fieldset>
    <div className="mt-[9px] flex flex-col gap-[5px] pl-[5px]">
      <Check label="Chọn lại các dầm trong Etabs khi click danh sách" className="h-4" />
      <div className="flex h-4">
        <Check label="Tự động tạo file backup" className="w-[214px]" />
        <Check label="Luôn nổi lên trên" />
      </div>
    </div>
  </div>
);

const Canvas = () => (
  <main className="relative h-[831px] overflow-hidden bg-black text-gray-100">
    <div className="flex h-[30px] items-center justify-between pr-[12px] pl-[3px]">
      <span className="text-[12px]">[−][Top][2D Wireframe]</span>
      <div className="flex items-center pt-px">
        <Ico w={10} h={10}><path d="M0 7.500h10" strokeWidth="3" stroke="#fff" /></Ico>
        <Ico w={10} h={10} className="ml-[11px]"><path d="M1 3h6v6H1zM3 1h6v6" strokeWidth="1.800" stroke="#fff" /></Ico>
        <Ico w={9} h={9} className="ml-[10px]"><path d="m1 1 7 7M8 1 1 8" strokeWidth="2" stroke="#fff" /></Ico>
      </div>
    </div>
    <ViewCube />
    <NavBar />
    <UcsIcon />
    <CommandLine />
    <AddinWindow />
    <svg width="14" height="20" viewBox="0 0 14 20" className="absolute top-[364px] left-[1558px]">
      <path d="M.500.500v16l3.800-3.600 2.600 5.600 2.500-1.200-2.500-5.300H12z" fill="#fff" stroke="#1d1d3a" />
    </svg>
  </main>
);

/* ---------- STATUS BAR ---------- */

const Cell = ({ className, children }: { className: string, children: ReactNode }) => (
  <div className={twMerge("flex h-[25px] shrink-0 items-center justify-center bg-[#373f4d]", className)}>{children}</div>
);

const Compass = ({ children, className }: { children?: ReactNode, className?: string }) => (
  <Ico w={18} h={18} className={className}>
    <path d="M8 1 9.800 9l4.700 5v2l-4-2-.800 3.500L8 14l-1.700 3.500L5.500 14l-4 2v-2l4.700-5z" fill="#e8ebee" stroke="none" />
    {children}
  </Ico>
);

const StatusBar = () => (
  <div className="flex h-[29px] items-start justify-between border-t border-[#555b63] bg-[#222933]">
    <div className="flex h-[18px] pl-[10px] text-gray-300">
      <div className="w-[62px] bg-[#3f4a5a] text-center leading-[16px] font-bold text-white [clip-path:polygon(0_0,100%_0,54px_100%,8px_100%)]">Model</div>
      <div className="w-[65px] bg-[#2f3843] pr-[5px] text-center leading-[16px] [clip-path:polygon(0_0,100%_0,58px_100%,8px_100%)]">Layout1</div>
      <div className="w-[66px] bg-[#2f3843] pr-[5px] text-center leading-[16px] [clip-path:polygon(0_0,100%_0,58px_100%,8px_100%)]">Layout2</div>
      <div className="flex w-[23px] items-center justify-center bg-[#2f3843] [clip-path:polygon(7px_0,100%_0,16px_100%,0_100%)]"><Ico w={8} h={8}><path d="M4 0v8M0 4h8" strokeWidth="2" stroke="#a9aeb4" /></Ico></div>
    </div>
    <div className="mt-[1px] flex pr-px text-gray-100">
      <Cell className="w-[48px] text-[12px]">MODEL</Cell>
      <Cell className="ml-[2px] w-[65px] pr-[4px]">
        <Ico><path d="M3.500 0v16M8.500 0v16M13.500 0v16M0 2.500h16M0 7.500h16M0 12.500h16" strokeWidth="1.300" /></Ico>
        <Ico w={13} h={13} className="ml-[9px]"><path d="M1 0v13M6.500 0v13M12 0v13" strokeWidth="2" strokeDasharray="2 3.500" /></Ico>
        <Caret size={7} className="ml-[10px] text-gray-200" />
      </Cell>
      <Cell className="ml-[2px] w-[106px] pr-[4px]">
        <Ico w={16} h={17}><path d="M1 0v16.500h15M1 11h5v5" strokeWidth="1.400" /></Ico>
        <Ico w={17} h={16} className="ml-[8px]"><path d="M12.500 4A6 6 0 1 0 14 9H7l8-8" strokeWidth="1.300" /><path d="M10 12.500h5" /></Ico>
        <Caret size={7} className="ml-[8px] text-gray-200" />
        <Ico w={14} h={16} className="ml-[9px]"><path d="m1 2 12 13" stroke="#d97a7a" /><path d="M7 0v16" stroke="#58c158" strokeWidth="1.400" /></Ico>
        <Caret size={7} className="ml-[10px] text-gray-200" />
      </Cell>
      <Cell className="w-[22px] bg-[#5b92c4]"><Ico><path d="M0 14.500h16M1 14 14 3" stroke="#fff" strokeWidth="1.300" /><circle cx="7" cy="9" r="1.500" fill="#fff" /></Ico></Cell>
      <Cell className="ml-[2px] w-[22px] bg-[#5b92c4]"><Ico><path d="M3.500 5v9.500h12v-12H6" stroke="#fff" strokeWidth="1.300" /><path d="M.500.500h4v4h-4z" stroke="#fff" /></Ico></Cell>
      <Cell className="w-[17px]"><Caret size={7} /></Cell>
      <Cell className="ml-[4px] w-[22px] bg-[#5b92c4]"><Compass><circle cx="14" cy="3.500" r="2.200" /></Compass></Cell>
      <Cell className="w-[81px]">
        <Compass><path d="m16 1-3 3.500h3L13 8" /></Compass>
        <Compass className="ml-[5px]" />
        <span className="ml-[7px] text-[12px]">1:1</span>
        <Caret size={7} className="ml-[4px]" />
      </Cell>
      <Cell className="ml-[3px] w-[40px]"><BsGearFill size={15} /><Caret size={7} className="ml-[10px]" /></Cell>
      <Cell className="ml-[2px] w-[25px]"><Ico><path d="M8 0v16M0 8h16" strokeWidth="2" /></Ico></Cell>
      <Cell className="ml-[2px] w-[25px]"><Ico w={17} h={17}><path d="M1 1h6v5H1zM6.500 10l3.500 6H3.500z" /><circle cx="13" cy="6.500" r="3" /></Ico></Cell>
      <Cell className="ml-[2px] w-[24px]"><Ico w={17} h={14}><path d="M1 1h15v12H1z" strokeWidth="1.300" /><path d="M9.500 6 13 3.500M10.500 3.500H13V6M7.500 8 4 10.500M4 8v2.500h2.500" /></Ico></Cell>
      <Cell className="w-[26px]"><Ico w={17} h={15}><path d="M0 1.500h17M0 7.500h17M0 13.500h17" strokeWidth="2" /></Ico></Cell>
    </div>
  </div>
);

/* ---------- TASKBAR ---------- */

const Task = ({ className, mark, children }: { className?: string, mark?: string, children: ReactNode }) => (
  <div className={clsx("mx-[2px] flex h-[40px] w-[40px] flex-col items-center rounded-[4px] pt-[7px]", className)}>
    <div className="relative flex h-[26px] items-center justify-center">{children}</div>
    {mark && <span className={clsx("mt-[3px] h-[3px] rounded-full", mark)} />}
  </div>
);

const DOT = "w-[6px] bg-[#7b7f8c]";

const ZaloLogo = ({ big }: { big?: boolean }) => (
  <span className={clsx("flex items-center justify-center border-[#1a5fd8] bg-white font-bold text-[#1a5fd8]", big ? "h-6 w-6 rounded-[7px] border-b-2 border-l-2 text-[9px]" : "h-[16px] w-[16px] rounded-[4px] border-b border-l text-[6px]")}>Zalo</span>
);

const Taskbar = () => (
  <footer className="flex h-[48px] items-center bg-[linear-gradient(to_right,#e3f1fb_0%,#e1ecf9_16%,#dadcf4_27%,#dadcf4_65%,#e1ecf8_80%,#e3f2fa_100%)] text-[#1f2430]">
    <div className="flex w-[1474px] items-center pl-[697px]">
      <Task><Ico w={23} h={24}><path d="M0 0h11v11.500H0zM12 0h11v11.500H12zM0 12.500h11V24H0zM12 12.500h11V24H12z" fill="#1a94dc" stroke="none" /><path d="M0 0h11v11.500H0z" fill="#3eb7ee" stroke="none" /></Ico></Task>
      <Task><Search size={24} strokeWidth={2.4} /></Task>
      <Task mark={DOT}><Ico w={24} h={22}><path d="M0 2a2 2 0 0 1 2-2h6l3 3h11a2 2 0 0 1 2 2v15H0z" fill="#f8c236" stroke="none" /><path d="M0 0h9v5H0z" fill="#c98a12" stroke="none" /><path d="M5 22v-5a2 2 0 0 1 2-2h11a2 2 0 0 1 2 2v5z" fill="#1b76b8" stroke="none" /></Ico></Task>
      <Task><span className="flex h-6 w-6 items-center justify-center rounded-[3px] bg-white"><Ico w={18} h={18}><path d="M17 2.500H9C4 3 1.500 6 2 10c.500 4 3 5.500 6 5.500 4 0 6.500-2.500 7-7H8.500" stroke="#1478e8" strokeWidth="3.200" /></Ico></span></Task>
      <Task className="bg-[#eaa9a6]" mark="w-[32px] bg-[#c4201c]">
        <ZaloLogo big />
        <span className="absolute -top-[5px] left-[13px] flex h-4 w-4 items-center justify-center rounded-full bg-[#f0100f] text-[10px] text-white">4</span>
      </Task>
      <Task mark={DOT}><Ico w={24} h={24}><circle cx="11" cy="13" r="8" stroke="#6cb83c" strokeWidth="5.500" /><circle cx="11" cy="13" r="3" fill="#6cb83c" stroke="none" /><path d="m12 10 0-10M14 11l5-10M16 13l7-7" stroke="#fff" strokeWidth="3" /><path d="M12 7V2M15 9l3-6M17 11l5-4" stroke="#f0582f" strokeWidth="1.800" /></Ico></Task>
      <Task mark={DOT}><Ico w={18} h={26}><path d="M0 3h18v20H0z" fill="#36b0cf" stroke="none" /><path d="M2 1v4M5.500 1v4M9 1v4M12.500 1v4M16 1v4" stroke="#14506b" strokeWidth="1.500" /><path d="M3 9.500h12M3 13.500h12M3 17.500h9" stroke="#14506b" strokeWidth="1.600" /><path d="M0 24.500h18" stroke="#9a4a1c" strokeWidth="2" /></Ico></Task>
      <Task mark={DOT}><Ico w={24} h={26}><path d="M17 0 24 4v18l-7 4-9-10-5 4-3-2V8l3-2 5 4z" fill="#8c5fc9" stroke="none" /><path d="m17 8-6 5 6 5zM3 10v6l3-3z" fill="#dcdff5" stroke="none" /><path d="M17 0 24 4v18l-7 4z" fill="#ab7ce8" stroke="none" /></Ico></Task>
      <Task mark={DOT}><Ico w={24} h={26}><path d="M8 1h16v24H8z" fill="#a9bfd0" stroke="none" /><path d="m12 25 10-24M16 25h8V8z" fill="#5d7182" stroke="#5d7182" /><path d="M0 6h13v15H0z" fill="#1273c4" stroke="none" /><path d="M10 9.500H4.500v8H10M4.500 13.500h5" stroke="#fff" strokeWidth="2" /></Ico></Task>
      <Task mark={DOT}><Ico w={24} h={26}><rect x="0" y="0" width="24" height="26" rx="6" fill="#10283a" stroke="none" /><path d="m8 8 4-4 3 3-4 4z" fill="#fff" stroke="none" /><path d="m9 14 6-6 3 3-6 6z" fill="#4fe0c8" stroke="none" /><rect x="9" y="21" width="6" height="2" rx="1" fill="#dfe7ec" stroke="none" /></Ico></Task>
      <Task className="bg-[#f2f3fb]" mark="w-[16px] bg-[#1878d4]"><AppLogo size={17} /></Task>
      <Task mark={DOT}><Ico w={24} h={26}><rect x="0" y="0" width="24" height="26" rx="3" fill="#2e8b1e" stroke="none" /><path d="M4 3h16v20H7z" fill="#fff" stroke="none" /><path d="M8 6h1.500v1.500H8zM14 6h1.500v1.500H14zM9 14h1.500v1.500H9z" fill="#d8232f" stroke="#d8232f" /><path d="M19 9c4 4 6 7 5 11s-8 6-10 3c-2-4 5-7 5-14z" fill="#f08a1c" stroke="none" /><path d="M19 16c2 3 2 5 0 7s-4-1-3-3z" fill="#ffd54a" stroke="none" /></Ico></Task>
    </div>
    <div className="flex flex-1 items-center">
      <Ico w={16} h={16}><path d="m3 10.500 5-5 5 5" stroke="#20242e" strokeWidth="1.500" /></Ico>
      <Ico w={16} h={14} className="ml-[16px]"><path d="M3 1.500h10M3 12.500h10" stroke="#f08a3c" strokeWidth="2" /><path d="M0 7h16" stroke="#3fae49" strokeWidth="3" strokeDasharray="4.500 1" /></Ico>
      <span className="relative ml-[16px] flex"><ZaloLogo /><span className="absolute -top-[2px] -right-[2px] h-[7px] w-[7px] rounded-full bg-[#f23a2a]" /></span>
      <Ico w={17} h={16} className="ml-[16px]"><path d="M4 3.500C1.500 6 .500 10 1 13c2 1 3 1 4 1l1-1.500h5l1 1.500c1 0 2 0 4-1 .500-3-.500-7-3-9.500l-2.500-.500-.500 1h-3L6.500 3z" fill="#fff" stroke="#555" /><circle cx="6" cy="9" r="1" stroke="#444" /><circle cx="11" cy="9" r="1" stroke="#444" /></Ico>
      <Ico w={13} h={14} className="ml-[17px]"><path d="M0 0h13v14H0z" fill="#6b4a2a" stroke="none" /><path d="M3 2h4v7H3z" fill="#4fc14f" stroke="none" /><path d="M7 2h3v7H7z" fill="#f5c92a" stroke="none" /><path d="M3 11.500h7" stroke="#ddd" strokeDasharray="1 1" /></Ico>
      <Ico w={16} h={17} className="ml-[17px]"><path d="M1 16C3 8 7 3 15 0c0 7-4 12-11 13l-2 3z" fill="#9a55b8" stroke="none" /><path d="M1 16 12 4" stroke="#d9b8e8" /></Ico>
      <Ico w={12} h={14} className="ml-[18px]"><path d="M1 .800h10v3H4.500v2h5.500v3H4.500v2H11v3H1z" stroke="#2f86d8" strokeWidth="1.400" fill="#d5ebfb" /></Ico>
      <Mic size={18} strokeWidth={1.8} className="ml-[17px] text-[#3a5f88]" />
      <Ico w={17} h={17} className="ml-[15px]"><path d="M10 2.500H1v9.500h12V9M4 15.500h6M7 12v3.500" stroke="#2b2f3a" strokeWidth="1.300" /><path d="M12 1.500h4v4h-4zM14 5.500V9" stroke="#2b2f3a" strokeWidth="1.300" /></Ico>
      <Ico w={16} h={14} className="ml-[7px]"><path d="M1 5h2.500L7.500 1.500v11L3.500 9H1z" stroke="#2b2f3a" strokeWidth="1.200" /><path d="M10 4.500c1.300 1.500 1.300 3.500 0 5" stroke="#2b2f3a" /><path d="M12.500 2.500c2.500 3 2.500 6 0 9" stroke="#b3bac5" /></Ico>
      <Ico w={20} h={14} className="ml-[8px]"><rect x=".700" y="2.700" width="16.500" height="9" rx="2.500" fill="#1d8a2c" stroke="#173a1d" strokeWidth="1.300" /><path d="M19 5.500v3.500" stroke="#173a1d" strokeWidth="1.500" /><path d="m10 0-4 7h3l-1 5 5-7h-3z" fill="#173a1d" stroke="#dff" strokeWidth=".6" /></Ico>
      <div className="ml-auto flex flex-col text-right leading-[16px]">
        <span>8:58 AM</span>
        <span>01/22/2026</span>
      </div>
      <Ico w={16} h={17} className="mr-[20px] ml-[8px]"><path d="M8 2C4.500 2 3.500 4.500 3.500 8L1.500 12.500h11l-1-3M5.500 13c0 3 4 3 4 0" stroke="#2b2f3a" strokeWidth="1.200" /><path d="M7 5h3L7 9h3M11.500 1h3l-3 4h3" stroke="#2b2f3a" /></Ico>
    </div>
  </footer>
);

const App = () => (
  <div className="h-[1080px] w-[1920px] overflow-hidden bg-[#222933] font-['Noto_Sans',sans-serif] text-[11.5px] tracking-[-0.15px] text-gray-100">
    <header className="relative h-[169px]">
      <TitleBar />
      <div className="absolute top-[6px] left-[8px]"><AppLogo size={24} /></div>
      <RibbonTabs />
      <div className="ml-[2px] flex h-[97px] bg-[#3b4453]">
        <DrawPanel />
        <ModifyPanel />
        <AnnotationPanel />
        <LayersPanel />
        <BlockPanel />
        <PropertiesPanel />
        <RightPanels />
      </div>
      <FileTabs />
    </header>
    <div className="h-[3px] bg-[#424a5f]" />
    <Canvas />
    <StatusBar />
    <Taskbar />
  </div>
);

export default App;
